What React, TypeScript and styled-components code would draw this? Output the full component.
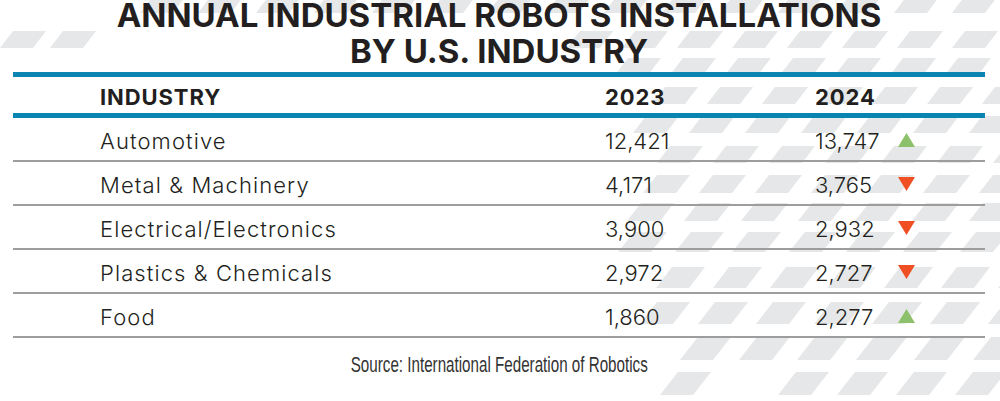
import React from 'react'
import styled, { createGlobalStyle } from 'styled-components'

type Trend = 'up' | 'down'

type Row = {
	industry: string
	y2023: string
	y2024: string
	trend: Trend
}

type StripeRow = {
	y: number
	h: number
	x0: number
	p: number
	skip?: number[]
	until?: number
}

const rows: Row[] = [
	{ industry: 'Automotive', y2023: '12,421', y2024: '13,747', trend: 'up' },
	{ industry: 'Metal & Machinery', y2023: '4,171', y2024: '3,765', trend: 'down' },
	{ industry: 'Electrical/Electronics', y2023: '3,900', y2024: '2,932', trend: 'down' },
	{ industry: 'Plastics & Chemicals', y2023: '2,972', y2024: '2,727', trend: 'down' },
	{ industry: 'Food', y2023: '1,860', y2024: '2,277', trend: 'up' },
]

// rows of slanted tiles in the background, getting a bit bigger towards the bottom
const stripeRows: StripeRow[] = [
	{ y: -3, h: 16, x0: 140, p: 58 },
	{ y: 31, h: 17, x0: 0, p: 50, until: 60 },
	{ y: 31, h: 17, x0: 567, p: 55 },
	{ y: 58, h: 17, x0: 615, p: 55 },
	{ y: 87, h: 17, x0: 652, p: 55 },
	{ y: 116, h: 17, x0: 633, p: 56 },
	{ y: 146, h: 17, x0: 657, p: 56 },
	{ y: 175, h: 18, x0: 643, p: 56 },
	{ y: 203, h: 18, x0: 627, p: 57 },
	{ y: 232, h: 20, x0: 618, p: 57 },
	{ y: 267, h: 21, x0: 656, p: 57 },
	{ y: 302, h: 22, x0: 640, p: 58 },
	{ y: 337, h: 23, x0: 680, p: 58.5 },
	{ y: 372, h: 23, x0: 660, p: 59, skip: [1] },
]

const GlobalStyle = createGlobalStyle`
	html, body {
		margin: 0;
		padding: 0;
		background: #ffffff;
	}
	body {
		font-family: 'Inter', 'Liberation Sans', sans-serif;
		color: #231f20;
	}
`

const Page = styled.div`
	position: relative;
	width: 1000px;
	height: 401px;
	overflow: hidden;
	background: #ffffff;
`

const Backdrop = styled.svg`
	position: absolute;
	left: 0;
	top: 0;
	z-index: 0;
`

const Content = styled.div`
	position: relative;
	z-index: 1;
	display: flex;
	flex-direction: column;
	padding: 0 15px 0 13px;
`

const Title = styled.h1`
	margin: 0;
	display: flex;
	flex-direction: column;
	align-items: center;
	gap: 6px;
	font-family: 'Inter', 'Liberation Sans', sans-serif;
	font-weight: 700;
	font-size: 33px;
	line-height: 30px;
	color: #231f20;
`

const TitleLine = styled.span`
	display: block;
	white-space: nowrap;
`

const Table = styled.div`
	margin-top: 6px;
	border-top: 5px solid #0a84b1;
	display: flex;
	flex-direction: column;
`

const Line = styled.div<{ $head?: boolean }>`
	display: grid;
	grid-template-columns: 505px 210px 85px 1fr;
	align-items: center;
	padding-left: 87px;
	height: ${(p) => (p.$head ? '36px' : '42px')};
	border-bottom: ${(p) => (p.$head ? '5px solid #0a84b1' : '2px solid #9d9d9d')};
`

const HeadCell = styled.div`
	font-family: 'Inter', 'Liberation Sans', sans-serif;
	font-weight: 700;
	font-size: 22px;
	letter-spacing: 0.9px;
	padding-top: 3px;
	color: #231f20;
`

const Cell = styled.div<{ $num?: boolean }>`
	font-family: 'Inter', 'Liberation Sans', sans-serif;
	font-weight: 300;
	font-size: 22px;
	letter-spacing: ${(p) => (p.$num ? '0' : '1.1px')};
	padding-top: 3px;
	color: #231f20;
`

const Arrow = styled.span<{ $trend: Trend }>`
	display: block;
	width: 17px;
	height: 14px;
	margin-left: -2px;
	margin-top: 2px;
	background: ${(p) => (p.$trend === 'up' ? '#8cc06a' : '#f04e23')};
	clip-path: ${(p) =>
		p.$trend === 'up'
			? 'polygon(50% 0, 100% 100%, 0 100%)'
			: 'polygon(0 0, 100% 0, 50% 100%)'};
`

const Source = styled.p`
	margin: 14px 0 0;
	display: flex;
	justify-content: center;
	font-family: 'Liberation Sans', Arial, sans-serif;
	font-size: 22px;
	line-height: 26px;
	color: #333333;
`

const Narrow = styled.span`
	display: inline-block;
	white-space: nowrap;
	transform: scaleX(0.69);
	transform-origin: center;
`

function tiles() {
	const out: React.ReactNode[] = []
	stripeRows.forEach((r, ri) => {
		const s = Math.round(r.h * 0.78)
		const w = 33
		let i = 0
		for (let bx = r.x0; bx < 1000; bx += r.p, i++) {
			if (r.until !== undefined && bx > r.until) break
			if (r.skip?.includes(i)) continue
			const x = Math.round(bx)
			const pts = `${x + s},${r.y} ${x + s + w},${r.y} ${x + w},${r.y + r.h} ${x},${r.y + r.h}`
			out.push(<polygon key={`${ri}-${i}`} points={pts} />)
		}
	})
	return out
}

const App: React.FC = () => {
	return (
		<Page>
			<GlobalStyle />
			<Backdrop width="1000" height="401" viewBox="0 0 1000 401">
				<g fill="#e6e7e8">{tiles()}</g>
			</Backdrop>
			<Content>
				<Title>
					<TitleLine>ANNUAL INDUSTRIAL ROBOTS INSTALLATIONS</TitleLine>
					<TitleLine>BY U.S. INDUSTRY</TitleLine>
				</Title>
				<Table>
					<Line $head>
						<HeadCell>INDUSTRY</HeadCell>
						<HeadCell>2023</HeadCell>
						<HeadCell>2024</HeadCell>
						<span />
					</Line>
					{rows.map((r) => (
						<Line key={r.industry}>
							<Cell>{r.industry}</Cell>
							<Cell $num>{r.y2023}</Cell>
							<Cell $num>{r.y2024}</Cell>
							<Arrow $trend={r.trend} />
						</Line>
					))}
				</Table>
				<Source>
					<Narrow>Source: International Federation of Robotics</Narrow>
				</Source>
			</Content>
		</Page>
	)
}

export default App
